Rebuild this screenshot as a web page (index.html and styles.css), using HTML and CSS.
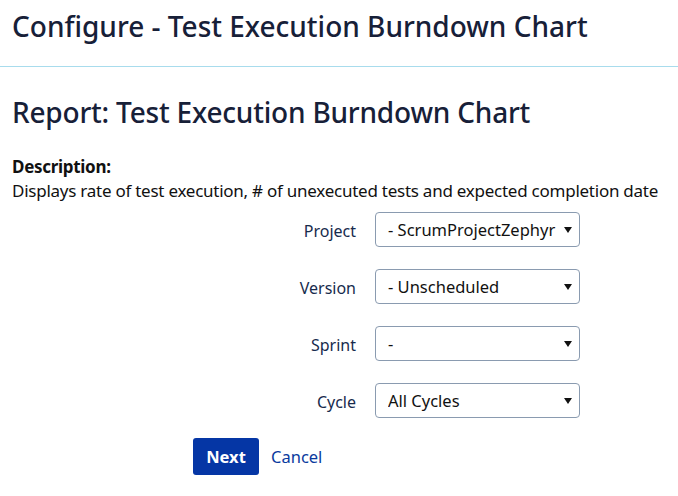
FILE: index.html
```html
<!DOCTYPE html>
<html>
<head>
<meta charset="utf-8">
<link rel="stylesheet" href="styles.css">
</head>
<body>
<header class="page-header">
  <h1 class="page-title">Configure - Test Execution Burndown Chart</h1>
</header>
<main class="content">
  <h2 class="report-title">Report: Test Execution Burndown Chart</h2>
  <div class="description">
    <div class="desc-label">Description:</div>
    <div class="desc-text">Displays rate of test execution, # of unexecuted tests and expected completion date</div>
  </div>
  <form class="config-form">
    <label class="field-label" for="project">Project</label>
    <div class="select-wrap">
      <select id="project" class="field-select"><option>- ScrumProjectZephyr</option></select>
      <span class="arrow"></span>
    </div>
    <label class="field-label" for="version">Version</label>
    <div class="select-wrap">
      <select id="version" class="field-select"><option>- Unscheduled</option></select>
      <span class="arrow"></span>
    </div>
    <label class="field-label" for="sprint">Sprint</label>
    <div class="select-wrap">
      <select id="sprint" class="field-select"><option>-</option></select>
      <span class="arrow"></span>
    </div>
    <label class="field-label" for="cycle">Cycle</label>
    <div class="select-wrap">
      <select id="cycle" class="field-select"><option>All Cycles</option></select>
      <span class="arrow"></span>
    </div>
  </form>
  <div class="actions">
    <button class="btn-next" type="button">Next</button>
    <a class="link-cancel" href="#">Cancel</a>
  </div>
</main>
</body>
</html>
```
FILE: styles.css
```css
* { box-sizing: border-box; }
html, body { margin: 0; padding: 0; background: #fff; }
body {
  font-family: "Noto Sans", "Open Sans", "DejaVu Sans", sans-serif;
  color: #172b4d;
}
.page-header {
  padding: 6px 12px 0;
  height: 67px;
  border-bottom: 1px solid #a8dced;
}
.page-title {
  margin: 0;
  font-size: 28px;
  font-weight: 500;
  line-height: 40px;
  color: #172038;
}
.content { padding: 0 12px; }
.report-title {
  margin: 25px 0 0;
  font-size: 28px;
  font-weight: 500;
  line-height: 40px;
  color: #172038;
  letter-spacing: -0.2px;
}
.description {
  margin-top: 23px;
  font-size: 17px;
  line-height: 24px;
  color: #111;
}
.desc-label { font-weight: 700; letter-spacing: -0.3px; }
.desc-text { letter-spacing: -0.25px; }
.config-form {
  display: grid;
  grid-template-columns: 344px 205px;
  column-gap: 19px;
  row-gap: 22px;
  align-items: center;
  margin-top: 9px;
}
.field-label {
  text-align: right;
  font-size: 16px;
  color: #172b4d;
  padding-top: 3px;
}
.select-wrap { position: relative; height: 35px; }
.field-select {
  appearance: none;
  -webkit-appearance: none;
  width: 100%;
  height: 35px;
  border: 1px solid #8a9bb0;
  border-radius: 4px;
  background: #fff;
  font-family: inherit;
  font-size: 16.5px;
  color: #111;
  padding: 0 22px 0 12px;
}
.arrow {
  position: absolute;
  right: 8px;
  top: 15px;
  width: 0; height: 0;
  border-left: 4px solid transparent;
  border-right: 4px solid transparent;
  border-top: 6px solid #111;
}
.actions {
  display: flex;
  align-items: center;
  gap: 12px;
  margin-top: 20px;
  padding-left: 181px;
}
.btn-next {
  height: 37px;
  width: 66px;
  border: none;
  border-radius: 3px;
  background: #0536a5;
  color: #fff;
  font-family: inherit;
  font-size: 16.5px;
  font-weight: 700;
}
.link-cancel {
  color: #0a3a9e;
  text-decoration: none;
  font-size: 16.5px;
}
```
